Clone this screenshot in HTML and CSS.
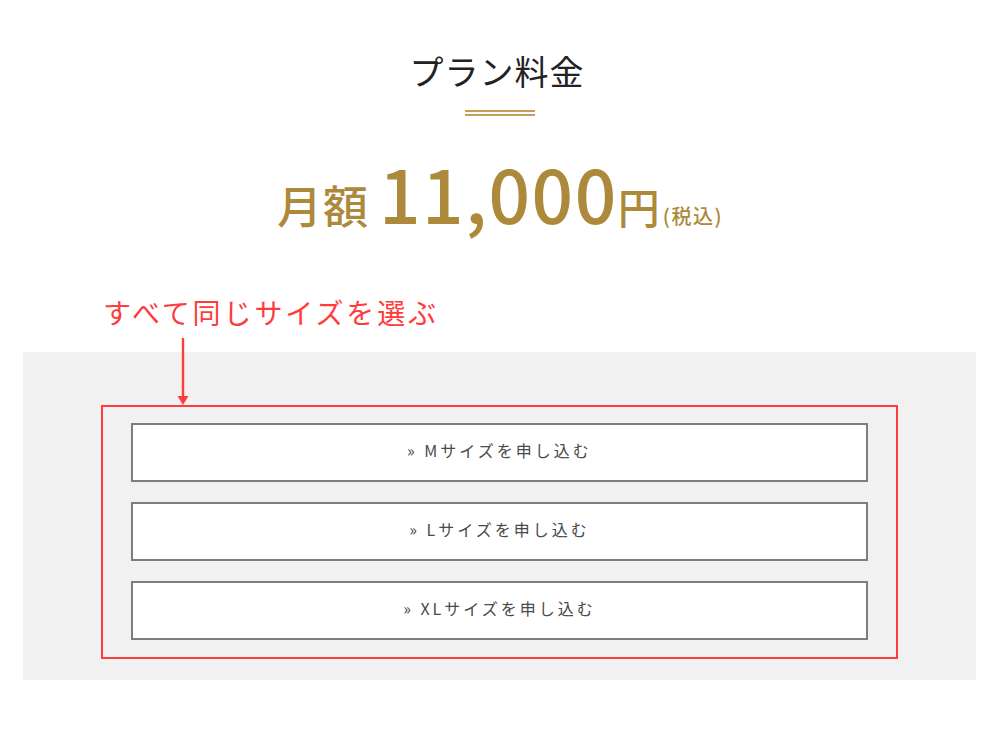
FILE: index.html
```html
<!DOCTYPE html>
<html lang="ja">
<head>
<meta charset="utf-8">
<title>プラン料金</title>
<link rel="stylesheet" href="styles.css">
</head>
<body>
<main class="page">
  <section class="plan">
    <h2 class="plan-title">プラン料金</h2>
    <div class="title-rule"></div>
    <p class="price"><span class="price-label">月額</span><span class="price-num">11,000</span><span class="price-yen">円</span><span class="price-tax">(税込)</span></p>
  </section>
  <section class="choose">
    <p class="note">すべて同じサイズを選ぶ</p>
    <div class="panel">
      <div class="highlight">
        <svg class="arrow" width="14" height="70" viewBox="0 0 14 70">
          <line x1="7" y1="0" x2="7" y2="62" stroke="#ff3b3b" stroke-width="2.4"/>
          <polygon points="1.5,58 12.5,58 7,67" fill="#ff3b3b"/>
        </svg>
        <a class="btn" href="#">»&nbsp;Mサイズを申し込む</a>
        <a class="btn" href="#">»&nbsp;Lサイズを申し込む</a>
        <a class="btn" href="#">»&nbsp;XLサイズを申し込む</a>
      </div>
    </div>
  </section>
</main>
</body>
</html>
```
FILE: styles.css
```css
* { box-sizing: border-box; }
html, body { margin: 0; padding: 0; background: #fff; }
body {
  font-family: "Noto Sans CJK JP", "Noto Sans", sans-serif;
  width: 1000px;
  height: 750px;
  overflow: hidden;
}
.page { display: flex; flex-direction: column; }
.plan {
  display: flex;
  flex-direction: column;
  align-items: center;
  padding-top: 54px;
}
.plan-title {
  margin: 0 0 0 -6px;
  font-size: 34px;
  font-weight: 400;
  line-height: 1;
  color: #222;
  letter-spacing: 1px;
}
.title-rule {
  margin-top: 22px;
  width: 70px;
  height: 6px;
  border-top: 2px solid #c3a15a;
  border-bottom: 2px solid #c3a15a;
}
.price {
  margin: 40px 0 0 0;
  display: flex;
  align-items: baseline;
  color: #ad8a3b;
  line-height: 1;
  font-weight: 500;
}
.price-label { font-size: 45px; letter-spacing: 1px; margin-right: 10px; }
.price-num { font-size: 73px; font-weight: 500; letter-spacing: 1.5px; }
.price-yen { font-size: 42px; margin-left: 0; }
.price-tax { font-size: 20px; letter-spacing: 1.5px; margin-left: 3px; }
.choose { display: flex; flex-direction: column; }
.note {
  margin: 69px 0 0 103px;
  font-size: 28px;
  line-height: 1;
  letter-spacing: 2.9px;
  color: #ff3b3b;
  font-weight: 400;
}
.panel {
  margin: 26px 0 0 23px;
  width: 953px;
  background: #f1f1f1;
  padding: 53px 0 21px 0;
  display: flex;
  justify-content: center;
}
.highlight {
  position: relative;
  width: 797px;
  border: 2px solid #ff3b3b;
  padding: 16px 28px 17px;
  display: flex;
  flex-direction: column;
  gap: 20px;
}
.arrow {
  position: absolute;
  left: 73px;
  top: -69px;
}
.btn {
  display: flex;
  align-items: center;
  justify-content: center;
  height: 59px;
  padding-bottom: 5px;
  background: #fff;
  border: 2px solid #7d7d7d;
  color: #4a4a4a;
  text-decoration: none;
  font-size: 16px;
  letter-spacing: 3px;
}
```
